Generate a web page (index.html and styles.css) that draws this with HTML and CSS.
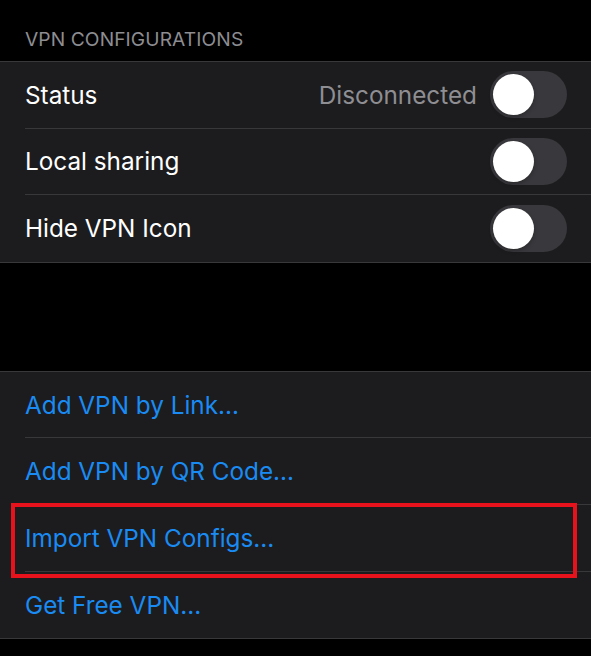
FILE: index.html
```html
<!DOCTYPE html>
<html>
<head>
<meta charset="utf-8">
<link rel="stylesheet" href="styles.css">
</head>
<body>
<div class="screen">
  <div class="section-header">VPN CONFIGURATIONS</div>
  <div class="group">
    <div class="row">
      <span class="label">Status</span>
      <span class="value">Disconnected</span>
      <span class="toggle"><span class="knob"></span></span>
    </div>
    <div class="row">
      <span class="label">Local sharing</span>
      <span class="toggle"><span class="knob"></span></span>
    </div>
    <div class="row">
      <span class="label">Hide VPN Icon</span>
      <span class="toggle"><span class="knob"></span></span>
    </div>
  </div>
  <div class="spacer"></div>
  <div class="group">
    <div class="row"><span class="link">Add VPN by Link...</span></div>
    <div class="row"><span class="link">Add VPN by QR Code...</span></div>
    <div class="row highlighted"><span class="link">Import VPN Configs...</span></div>
    <div class="row"><span class="link">Get Free VPN...</span></div>
  </div>
</div>
</body>
</html>
```
FILE: styles.css
```css
*, *::before, *::after { box-sizing: border-box; }
html, body {
  margin: 0;
  padding: 0;
  background: #000;
}
body {
  font-family: Inter, "Noto Sans", sans-serif;
  -webkit-font-smoothing: antialiased;
}
.screen {
  width: 591px;
  height: 656px;
  overflow: hidden;
  background: #000;
}
.section-header {
  height: 61px;
  padding: 28px 0 0 25px;
  color: #8d8d92;
  font-size: 19.2px;
  letter-spacing: 0.1px;
  line-height: 22px;
}
.group {
  background: #1c1c1e;
  border-top: 1px solid #38383a;
  border-bottom: 1px solid #38383a;
}
.row {
  position: relative;
  height: 66.6px;
  display: flex;
  align-items: center;
  margin-left: 25px;
  padding: 0 24px 0 0;
  border-bottom: 1px solid #38383a;
}
.row:last-child {
  border-bottom: none;
}
.label {
  flex: 1;
  color: #fff;
  font-size: 24.3px;
}
.value {
  color: #8e8e93;
  font-size: 24.3px;
  margin-right: 13px;
}
.link {
  color: #1a8bf2;
  font-size: 24.3px;
}
.toggle {
  width: 77px;
  height: 47px;
  border-radius: 24px;
  background: #39393d;
  display: flex;
  align-items: center;
  padding-left: 3px;
}
.knob {
  width: 41px;
  height: 41px;
  border-radius: 50%;
  background: #fff;
  box-shadow: 0 2px 4px rgba(0,0,0,0.25);
}
.spacer {
  height: 108px;
}
.highlighted::after {
  content: "";
  position: absolute;
  left: -14px;
  top: -2px;
  width: 566px;
  height: 75px;
  border: 4px solid #e8121d;
}
```
